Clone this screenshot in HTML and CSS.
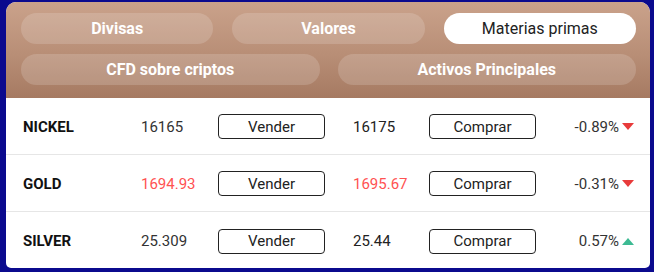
FILE: index.html
```html
<!DOCTYPE html>
<html lang="es">
<head>
<meta charset="utf-8">
<title>Cotizaciones</title>
<link rel="stylesheet" href="styles.css">
</head>
<body>
<div class="card">
  <div class="header">
    <div class="tabs tabs-3">
      <div class="tab">Divisas</div>
      <div class="tab">Valores</div>
      <div class="tab active">Materias primas</div>
    </div>
    <div class="tabs tabs-2">
      <div class="tab">CFD sobre criptos</div>
      <div class="tab">Activos Principales</div>
    </div>
  </div>
  <div class="rows">
    <div class="row">
      <div class="name">NICKEL</div>
      <div class="price">16165</div>
      <div class="btn">Vender</div>
      <div class="price price2">16175</div>
      <div class="btn">Comprar</div>
      <div class="change">-0.89% <span class="arrow down"></span></div>
    </div>
    <div class="row">
      <div class="name">GOLD</div>
      <div class="price red">1694.93</div>
      <div class="btn">Vender</div>
      <div class="price price2 red">1695.67</div>
      <div class="btn">Comprar</div>
      <div class="change">-0.31% <span class="arrow down"></span></div>
    </div>
    <div class="row">
      <div class="name">SILVER</div>
      <div class="price">25.309</div>
      <div class="btn">Vender</div>
      <div class="price price2">25.44</div>
      <div class="btn">Comprar</div>
      <div class="change">0.57% <span class="arrow up"></span></div>
    </div>
  </div>
</div>
</body>
</html>
```
FILE: styles.css
```css
html, body {
  margin: 0;
  padding: 0;
}
body {
  background: #0b0a8e;
  font-family: Roboto, "Liberation Sans", sans-serif;
  width: 654px;
  height: 272px;
  overflow: hidden;
}
.card {
  margin: 2px 4px 0 6px;
  width: 644px;
  height: 266px;
  background: #fff;
  border-radius: 10px 10px 5px 5px;
  overflow: hidden;
}
.header {
  height: 96px;
  box-sizing: border-box;
  padding: 11px 14px 13px 15px;
  background: linear-gradient(180deg, #caa28b 0%, #b88e76 55%, #a67a62 100%);
  display: flex;
  flex-direction: column;
  gap: 10px;
}
.tabs {
  display: grid;
  height: 31px;
}
.tabs-3 {
  grid-template-columns: 1fr 1fr 1fr;
  gap: 19px;
}
.tabs-2 {
  grid-template-columns: 1fr 1fr;
  gap: 18px;
}
.tab {
  background: rgba(255, 255, 255, 0.16);
  border-radius: 16px;
  color: #fff;
  font-weight: 700;
  font-size: 16px;
  display: flex;
  align-items: center;
  justify-content: center;
}
.tab.active {
  background: #fff;
  color: #222;
  font-weight: 400;
}
.row {
  height: 57px;
  box-sizing: border-box;
  border-bottom: 1px solid #e6e6e6;
  display: grid;
  grid-template-columns: 118px 77px 107px 104px 107px 1fr;
  align-items: center;
  padding: 1px 16px 0 17px;
  font-size: 15px;
  color: #333;
}
.row:last-child {
  border-bottom: none;
}
.name {
  font-weight: 700;
  color: #111;
}
.price2 {
  padding-left: 28px;
  color: #222;
}
.red, .price2.red {
  color: #ff5252;
}
.btn {
  height: 25px;
  box-sizing: border-box;
  border: 1px solid #222;
  border-radius: 4px;
  display: flex;
  align-items: center;
  justify-content: center;
  color: #222;
}
.change {
  text-align: right;
  display: flex;
  align-items: center;
  justify-content: flex-end;
  gap: 3px;
}
.arrow {
  width: 0;
  height: 0;
  border-left: 6px solid transparent;
  border-right: 6px solid transparent;
}
.arrow.down {
  border-top: 7px solid #e83b3b;
}
.arrow.up {
  border-bottom: 7px solid #3dba93;
}
```
